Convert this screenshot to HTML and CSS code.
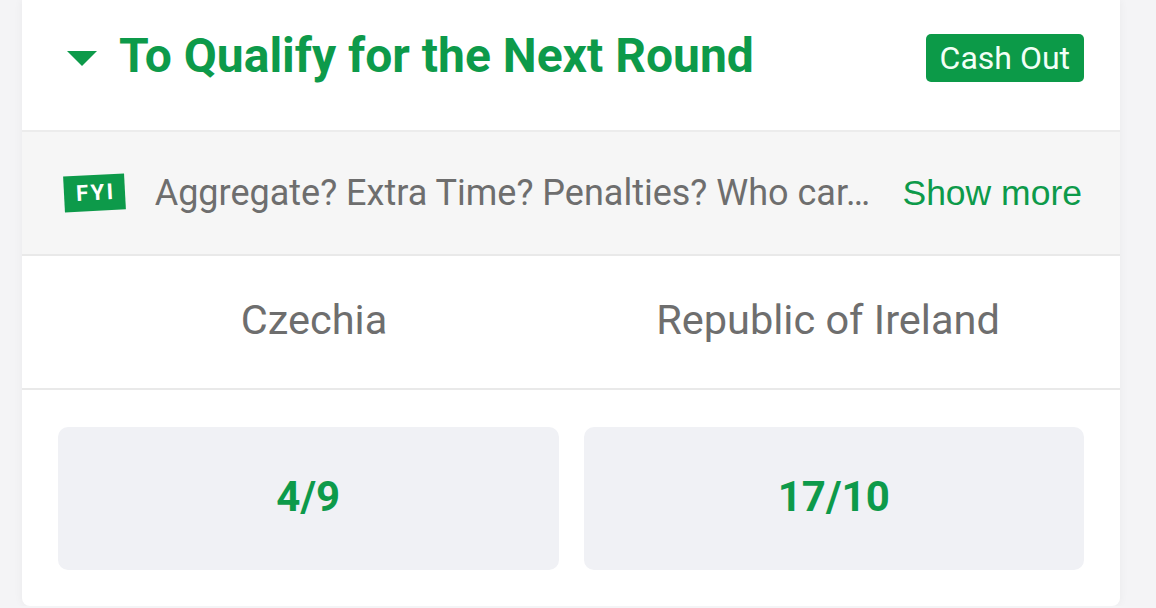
FILE: index.html
```html
<!DOCTYPE html>
<html>
<head>
<meta charset="utf-8">
<link rel="stylesheet" href="styles.css">
</head>
<body>
<div class="card">
  <div class="header">
    <div class="title-wrap">
      <svg class="caret" width="30" height="15" viewBox="0 0 30 15"><polygon points="0,0 30,0 15,15" fill="#0d9a4a"/></svg>
      <h1 class="title">To Qualify for the Next Round</h1>
    </div>
    <span class="cashout">Cash Out</span>
  </div>
  <div class="fyi-row">
    <span class="fyi">FYI</span>
    <span class="fyi-text">Aggregate? Extra Time? Penalties? Who car…</span>
    <span class="show-more">Show more</span>
  </div>
  <div class="teams">
    <div class="team">Czechia</div>
    <div class="team">Republic of Ireland</div>
  </div>
  <div class="odds">
    <div class="odd">4/9</div>
    <div class="odd">17/10</div>
  </div>
</div>
</body>
</html>
```
FILE: styles.css
```css
html, body {
  margin: 0;
  padding: 0;
  background: #f4f4f6;
  font-family: Roboto, "Liberation Sans", sans-serif;
}
.card {
  margin-left: 22px;
  width: 1098px;
  height: 606px;
  background: #fff;
  border-radius: 0 0 8px 8px;
  box-shadow: 0 0 10px rgba(0,0,0,0.05);
  display: flex;
  flex-direction: column;
  overflow: hidden;
}
.header {
  height: 130px;
  display: flex;
  align-items: center;
  justify-content: space-between;
  padding: 0 36px 0 45px;
  border-bottom: 2px solid #ececec;
  flex: none;
}
.title-wrap {
  display: flex;
  align-items: center;
  gap: 22px;
  margin-top: -18px;
}
.caret { flex: none; margin-top: 4px; }
.title {
  margin: 0;
  font-size: 48px;
  font-weight: 700;
  color: #0d9a4a;
  line-height: 1;
}
.cashout {
  background: #0c9a48;
  color: #f2fff6;
  font-size: 32px;
  line-height: 48px;
  height: 48px;
  padding: 0 14px;
  border-radius: 5px;
  margin-top: -14px;
}
.fyi-row {
  height: 122px;
  background: #f6f6f6;
  border-bottom: 2px solid #e9e9e9;
  display: flex;
  align-items: center;
  padding: 0 38px 0 42px;
  flex: none;
}
.fyi {
  background: #0d9a4a;
  color: #fff;
  font-weight: 700;
  font-size: 22px;
  letter-spacing: 2.5px;
  padding: 4px 9px 4px 12px;
  transform: rotate(-3deg);
  flex: none;
  line-height: 28px;
}
.fyi-text {
  flex: 1;
  min-width: 0;
  white-space: nowrap;
  overflow: hidden;
  color: #6e6e6e;
  font-size: 36px;
  margin-left: 30px;
}
.show-more {
  flex: none;
  margin-left: 20px;
  color: #0d9a4a;
  font-family: "Liberation Sans", Arial, sans-serif;
  font-size: 35.5px;
}
.teams {
  height: 132px;
  border-bottom: 2px solid #e9e9e9;
  display: grid;
  grid-template-columns: 1fr 1fr;
  padding: 0 35px;
  align-items: center;
  flex: none;
}
.team {
  text-align: center;
  color: #6e6e6e;
  font-size: 41.5px;
  margin-top: -6px;
}
.odds {
  display: grid;
  grid-template-columns: 1fr 1fr;
  gap: 25px;
  padding: 37px 36px 0 36px;
}
.odd {
  height: 143px;
  background: #f0f1f5;
  border-radius: 10px;
  display: flex;
  align-items: center;
  justify-content: center;
  color: #0d9a4a;
  font-weight: 700;
  font-size: 42px;
  padding-bottom: 4px;
  box-sizing: border-box;
}
```
